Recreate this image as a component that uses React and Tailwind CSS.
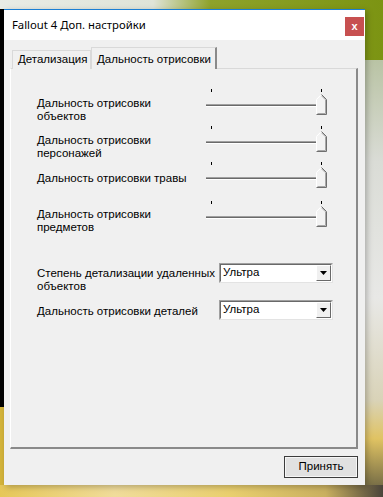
const ui = { fontFamily: '"Liberation Sans", Tahoma, Arial, sans-serif' };

function Slider() {
  return (
    <svg width="122" height="27" viewBox="0 0 122 27" className="block shrink-0">
      <rect x="5" y="0" width="1" height="3" fill="#000" />
      <rect x="115" y="0" width="1" height="3" fill="#000" />
      <rect x="0" y="15" width="112" height="1" fill="#a0a0a0" />
      <rect x="0" y="16" width="112" height="1" fill="#6a6a6a" />
      <rect x="0" y="17" width="112" height="1" fill="#ffffff" />
      <polygon points="110,10 115.5,4.5 121,10 121,26 110,26" fill="#f3f3f3" />
      <polyline points="110.5,25.5 110.5,10.5 115.5,5.5" fill="none" stroke="#ffffff" />
      <polyline points="115.5,5.5 120.5,10.5 120.5,25.5 110.5,25.5" fill="none" stroke="#6f6f6f" />
      <polyline points="115.5,6.8 119.5,10.8 119.5,24.5 111.5,24.5" fill="none" stroke="#a8a8a8" />
    </svg>
  );
}

function SliderRow({ label, top, pad }) {
  return (
    <div className="flex items-start h-[27px]" style={{ marginTop: top }}>
      <div className="w-[169px] text-[11.5px] leading-[13px] text-black whitespace-nowrap" style={{ paddingTop: pad }}>
        {label}
      </div>
      <Slider />
    </div>
  );
}

function Select({ value }) {
  return (
    <div className="w-[114px] h-[20px] shrink-0 bg-white border border-t-[#a0a0a0] border-l-[#a0a0a0] border-r-[#e3e3e3] border-b-[#e3e3e3] flex items-stretch">
      <div className="flex-1 border border-t-[#696969] border-l-[#696969] border-r-white border-b-white flex items-center pl-[2px] text-[11.5px] text-black">
        {value}
        <div className="ml-auto w-[15px] h-full bg-[#f0f0f0] border border-t-white border-l-white border-r-[#696969] border-b-[#696969] flex items-center justify-center">
          <svg width="7" height="4" viewBox="0 0 7 4">
            <polygon points="0,0 7,0 3.5,4" fill="#000" />
          </svg>
        </div>
      </div>
    </div>
  );
}

export default function App() {
  return (
    <div
      className="relative w-[383px] h-[497px] overflow-hidden bg-[linear-gradient(90deg,#e9ece6_0%,#dfe4d8_40%,#8ea22a_55%,#7c9413_100%)]"
      style={ui}
    >
      {/* desktop behind */}
      <div className="absolute left-0 top-[9px] w-[4px] h-[398px] bg-black" />
      <div className="absolute left-0 top-[407px] w-[4px] h-[90px] bg-[#d4b43a]" />
      <div className="absolute left-[365px] top-[60px] w-[18px] h-[340px] bg-[linear-gradient(180deg,#b9c3a4_0%,#dadcd6_30%,#e8e8e6_70%,#d9d3b8_100%)]" />
      <div className="absolute left-[365px] top-[400px] w-[18px] h-[97px] bg-[linear-gradient(180deg,#d9d3b8_0%,#e0c363_40%,#5f5a40_100%)]" />
      <div className="absolute left-0 top-[485px] w-[383px] h-[12px] bg-[linear-gradient(90deg,#e6c758_0%,#f0dc9a_30%,#e9cf6e_60%,#c9b060_85%,#4a443a_100%)]" />

      {/* window */}
      <div className="absolute left-[4px] top-[9px] w-[361px] h-[476px] bg-[#f0f0f0] border-t border-[#1a7fd4] shadow-[2px_2px_6px_rgba(0,0,0,0.25)] flex flex-col">
        <div className="h-[30px] bg-white flex items-center pl-[8px] pr-[1px] shrink-0">
          <span className="text-[11.3px] text-black" style={{ fontFamily: '"Noto Sans", "Open Sans", sans-serif' }}>
            Fallout 4 Доп. настройки
          </span>
          <div className="ml-auto mt-[2px] w-[19px] h-[19px] bg-[#c75050] flex items-center justify-center text-white text-[11px] font-bold leading-none">
            x
          </div>
        </div>

        <div className="pl-[6px] pr-[7px] pt-[6px] flex flex-col flex-1">
          {/* tabs */}
          <div className="flex items-end h-[22px] pl-[2px] relative z-10">
            <div className="h-[19px] pl-[5px] border border-b-0 border-[#d9d9d9] bg-[#f0f0f0] text-[11.5px] flex items-center w-[79px] mb-[-1px] whitespace-nowrap">
              Детализация
            </div>
            <div className="h-[22px] w-[126px] pl-[5px] border-t border-l border-t-[#d9d9d9] border-l-[#d9d9d9] border-r-2 border-r-[#8a8a8a] bg-[#f0f0f0] text-[11.5px] flex items-start pt-[3px] mb-[-1px] whitespace-nowrap">
              Дальность отрисовки
            </div>
          </div>

          {/* panel */}
          <div className="h-[381px] border-t border-l border-t-[#d9d9d9] border-l-white border-r-2 border-b-2 border-r-[#8a8a8a] border-b-[#8a8a8a] pl-[26px] flex flex-col">
            <SliderRow label={<>Дальность отрисовки<br />объектов</>} top={20} pad={8} />
            <SliderRow label={<>Дальность отрисовки<br />персонажей</>} top={10} pad={8} />
            <SliderRow label="Дальность отрисовки травы" top={9} pad={10} />
            <SliderRow label={<>Дальность отрисовки<br />предметов</>} top={12} pad={7} />

            <div className="flex items-start h-[20px] mt-[35px]">
              <div className="w-[182px] text-[11.5px] leading-[13px] pt-[4px] whitespace-nowrap">
                Степень детализации удаленных<br />объектов
              </div>
              <Select value="Ультра" />
            </div>
            <div className="flex items-start h-[20px] mt-[17px]">
              <div className="w-[182px] text-[11.5px] leading-[13px] pt-[5px] whitespace-nowrap">
                Дальность отрисовки деталей
              </div>
              <Select value="Ультра" />
            </div>
          </div>

          <div className="flex justify-end mt-[7px]">
            <div className="w-[74px] h-[22px] border border-[#3c3c3c] bg-[#e1e1e1] flex items-center justify-center text-[11.5px] text-black shadow-[inset_0_0_0_1px_#f6f6f6]">
              Принять
            </div>
          </div>
        </div>
      </div>
    </div>
  );
}
